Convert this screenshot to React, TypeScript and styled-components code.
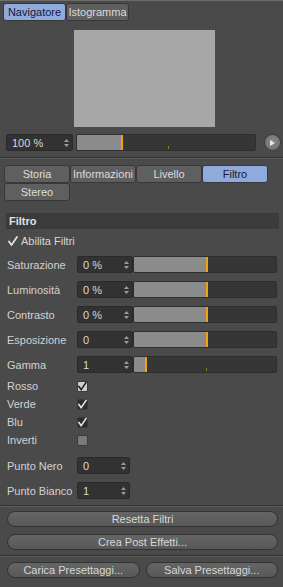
import React from "react";
import styled, { createGlobalStyle } from "styled-components";

const Global = createGlobalStyle`
  html, body { margin: 0; padding: 0; background: #4a4a4a; }
  body { font-family: "Liberation Sans", Arial, sans-serif; font-size: 11px; color: #d6d6d6; }
  * { box-sizing: border-box; }
`;

const Root = styled.div`
  width: 283px;
  height: 587px;
  background: #4a4a4a;
  border-top: 1px solid #6c6c6c;
  display: flex;
  flex-direction: column;
  overflow: hidden;
`;

const TopTabs = styled.div`
  display: flex;
  margin: 2px 0 0 3px;
`;

const Tab = styled.div<{ $active?: boolean; $w?: number }>`
  width: ${(p) => p.$w ?? 66}px;
  height: 18px;
  display: flex;
  align-items: center;
  justify-content: center;
  font-size: 11px;
  border: 1px solid #383838;
  border-radius: 3px;
  background: ${(p) => (p.$active ? "#8fabdc" : "#5f5f5f")};
  color: ${(p) => (p.$active ? "#14183a" : "#dcdcdc")};
  white-space: nowrap;
  overflow: hidden;
`;

const PreviewArea = styled.div`
  height: 107px;
  padding: 9px 0 0 74px;
`;

const PreviewBox = styled.div`
  width: 141px;
  height: 97px;
  background: #a7a7a7;
`;

const ZoomRow = styled.div`
  display: flex;
  align-items: center;
  height: 17px;
  margin-top: 6px;
  padding-left: 6px;
`;

const SpinInput = styled.div<{ $w: number }>`
  width: ${(p) => p.$w}px;
  height: 17px;
  background: #323232;
  border: 1px solid #2a2a2a;
  border-radius: 2px;
  display: flex;
  align-items: center;
  padding-left: 5px;
  color: #d8d8d8;
  font-size: 11px;
  position: relative;
  flex-shrink: 0;
`;

const Spin = styled.svg`
  position: absolute;
  right: 3px;
  top: 4px;
`;

const Track = styled.div<{ $w: number; $ml: number }>`
  width: ${(p) => p.$w}px;
  height: 17px;
  margin-left: ${(p) => p.$ml}px;
  background: #363636;
  border: 1px solid #2e2e2e;
  border-radius: 2px;
  position: relative;
  overflow: hidden;
  flex-shrink: 0;
`;

const Fill = styled.div`
  position: absolute;
  left: 0;
  top: 0;
  bottom: 0;
  background: #8b8b8b;
`;

const Marker = styled.div`
  position: absolute;
  top: 0;
  bottom: 0;
  width: 2px;
  background: #f2a20c;
`;

const Tick = styled.div`
  position: absolute;
  bottom: 1px;
  width: 1px;
  height: 3px;
  background: #8a7a3a;
`;

const RoundButton = styled.div`
  width: 17px;
  height: 17px;
  border-radius: 50%;
  margin-left: 8px;
  background: radial-gradient(circle at 50% 40%, #8a8a8a, #6a6a6a);
  border: 1px solid #3c3c3c;
  display: flex;
  align-items: center;
  justify-content: center;
`;

const Separator = styled.div<{ $mt: number }>`
  margin-top: ${(p) => p.$mt}px;
  height: 2px;
  border-top: 1px solid #333;
  border-bottom: 1px solid #5c5c5c;
  flex-shrink: 0;
`;

const LowerTabs = styled.div`
  display: grid;
  grid-template-columns: repeat(4, 66px);
  grid-auto-rows: 18px;
  margin: 6px 0 0 4px;
`;

const Header = styled.div`
  margin: 12px 4px 0 6px;
  height: 16px;
  background: #3b3b3b;
  font-weight: bold;
  color: #e2e2e2;
  display: flex;
  align-items: center;
  padding-left: 3px;
  font-size: 11px;
`;

const CheckRow = styled.div<{ $mt?: number }>`
  display: flex;
  align-items: center;
  height: 16px;
  margin: ${(p) => p.$mt ?? 4}px 0 0 8px;
  gap: 3px;
`;

const Row = styled.div<{ $mt: number; $h?: number }>`
  display: flex;
  align-items: center;
  height: ${(p) => p.$h ?? 17}px;
  margin-top: ${(p) => p.$mt}px;
  padding-left: 7px;
`;

const Label = styled.div`
  width: 70px;
  color: #d2d2d2;
  font-size: 11px;
  white-space: nowrap;
  flex-shrink: 0;
`;

const Box = styled.div<{ $variant: "light" | "dark" | "off" }>`
  width: 11px;
  height: 11px;
  border-radius: 2px;
  background: ${(p) =>
    p.$variant === "light" ? "#cfcfcf" : p.$variant === "dark" ? "#2c2c2c" : "#7a7a7a"};
  border: 1px solid #3a3a3a;
  display: flex;
  align-items: center;
  justify-content: center;
`;

const Buttons = styled.div`
  display: flex;
  gap: 6px;
  margin: 0 5px 0 7px;
`;

const Pill = styled.div<{ $mt: number }>`
  flex: 1;
  height: 16px;
  margin-top: ${(p) => p.$mt}px;
  border-radius: 8px;
  background: linear-gradient(#656565, #585858);
  border: 1px solid #333;
  color: #d8d8d8;
  font-size: 11px;
  display: flex;
  align-items: center;
  justify-content: center;
`;

const SpinArrows = () => (
  <Spin width="5" height="8" viewBox="0 0 5 8">
    <path d="M2.5 0 L5 3 L0 3 Z M2.5 8 L5 5 L0 5 Z" fill="#9a9a9a" />
  </Spin>
);

const Check = ({ color }: { color: string }) => (
  <svg width="10" height="10" viewBox="0 0 10 10">
    <path d="M1 5.5 L3.5 9 L9 1" stroke={color} strokeWidth="1.8" fill="none" strokeLinecap="round" />
  </svg>
);

const Slider = ({ w, ml, fill, ticks = [] }: { w: number; ml: number; fill: number; ticks?: number[] }) => (
  <Track $w={w} $ml={ml}>
    <Fill style={{ width: fill }} />
    <Marker style={{ left: fill }} />
    {ticks.map((t) => (
      <Tick key={t} style={{ left: t }} />
    ))}
  </Track>
);

const valueRows = [
  { label: "Saturazione", value: "0 %", fill: 72, mt: 7 },
  { label: "Luminosità", value: "0 %", fill: 72, mt: 8 },
  { label: "Contrasto", value: "0 %", fill: 72, mt: 8 },
  { label: "Esposizione", value: "0", fill: 72, mt: 8 },
  { label: "Gamma", value: "1", fill: 11, mt: 8, ticks: [72] },
];

const checkRows: { label: string; v: "light" | "dark" | "off" }[] = [
  { label: "Rosso", v: "light" },
  { label: "Verde", v: "dark" },
  { label: "Blu", v: "dark" },
  { label: "Inverti", v: "off" },
];

export default function App() {
  return (
    <Root>
      <Global />
      <TopTabs>
        <Tab $active $w={63}>Navigatore</Tab>
        <Tab $w={63}>Istogramma</Tab>
      </TopTabs>
      <PreviewArea>
        <PreviewBox />
      </PreviewArea>
      <ZoomRow>
        <SpinInput $w={67}>
          100 %
          <SpinArrows />
        </SpinInput>
        <Slider w={180} ml={3} fill={44} ticks={[91]} />
        <RoundButton>
          <svg width="5" height="6" viewBox="0 0 5 6">
            <path d="M0 0 L5 3 L0 6 Z" fill="#e8e8e8" />
          </svg>
        </RoundButton>
      </ZoomRow>
      <Separator $mt={6} />
      <LowerTabs>
        <Tab>Storia</Tab>
        <Tab>Informazioni</Tab>
        <Tab>Livello</Tab>
        <Tab $active>Filtro</Tab>
        <Tab>Stereo</Tab>
      </LowerTabs>
      <Header>Filtro</Header>
      <CheckRow>
        <Check color="#e0e0e0" />
        <span>Abilita Filtri</span>
      </CheckRow>
      {valueRows.map((r) => (
        <Row key={r.label} $mt={r.mt}>
          <Label>{r.label}</Label>
          <SpinInput $w={56}>
            {r.value}
            <SpinArrows />
          </SpinInput>
          <Slider w={144} ml={0} fill={r.fill} ticks={r.ticks} />
        </Row>
      ))}
      {checkRows.map((r, i) => (
        <Row key={r.label} $mt={i === 0 ? 4 : 0} $h={18}>
          <Label>{r.label}</Label>
          <Box $variant={r.v}>
            {r.v !== "off" && <Check color={r.v === "light" ? "#222" : "#e6e6e6"} />}
          </Box>
        </Row>
      ))}
      <Row $mt={8}>
        <Label>Punto Nero</Label>
        <SpinInput $w={53}>
          0
          <SpinArrows />
        </SpinInput>
      </Row>
      <Row $mt={8}>
        <Label>Punto Bianco</Label>
        <SpinInput $w={53}>
          1
          <SpinArrows />
        </SpinInput>
      </Row>
      <Separator $mt={6} />
      <Buttons>
        <Pill $mt={4}>Resetta Filtri</Pill>
      </Buttons>
      <Buttons>
        <Pill $mt={7}>Crea Post Effetti...</Pill>
      </Buttons>
      <Separator $mt={5} />
      <Buttons>
        <Pill $mt={5}>Carica Presettaggi...</Pill>
        <Pill $mt={5}>Salva Presettaggi...</Pill>
      </Buttons>
    </Root>
  );
}
